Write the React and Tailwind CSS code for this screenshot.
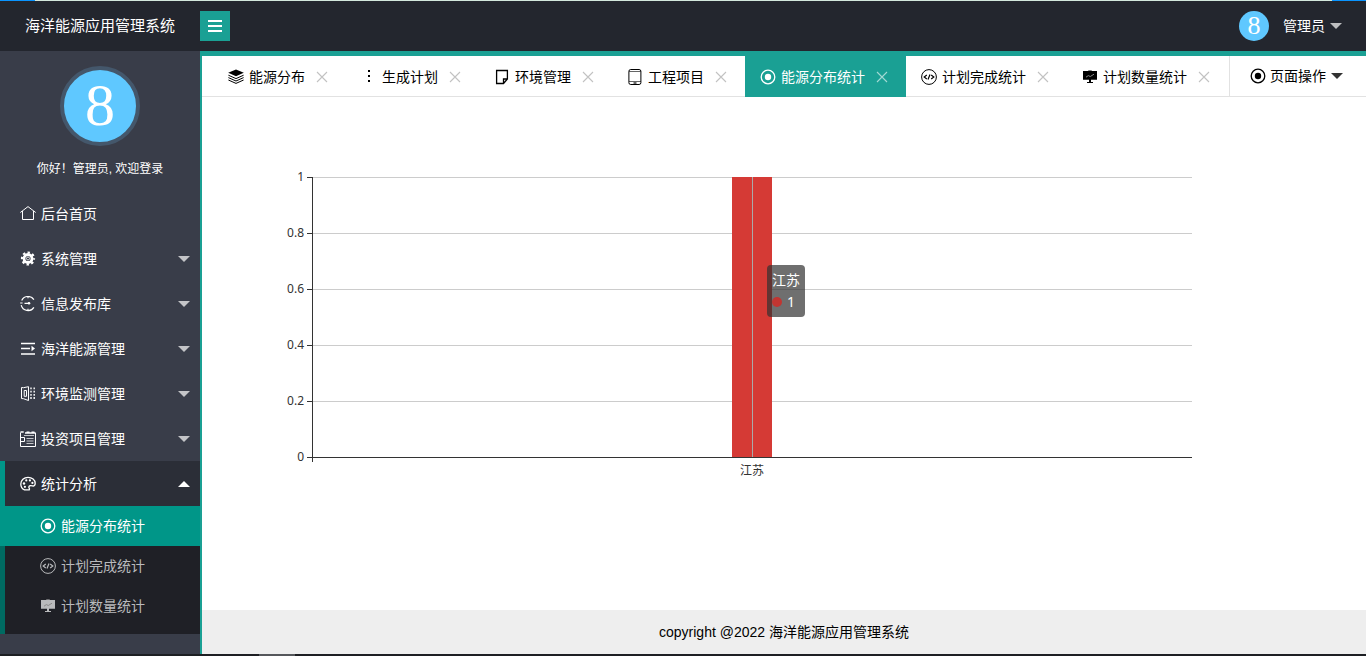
import React from "react";

const iconPaths = {
  home: (
    <g fill="none" stroke="currentColor" strokeWidth="1">
      <path d="M.3 6.5 8 .6l7.700 5.900M2.500 5v8.500h11V5" />
    </g>
  ),
  gear: (
    <g fill="none" stroke="currentColor">
      <circle cx="8" cy="7.5" r="4" strokeWidth="2.8" />
      <circle cx="8" cy="7.5" r="6" strokeWidth="2.2" strokeDasharray="2.4 2.312" strokeDashoffset="1.2" />
      <circle cx="8" cy="7.5" r="1.5" strokeWidth=".8" />
    </g>
  ),
  release: (
    <g fill="none" stroke="currentColor" strokeWidth="1.2">
      <path d="M13.9 3.700A7 7 0 0 0 1.700 4.500M1.200 9.100a7 7 0 0 0 12.700 2.200" />
      <path d="M.2 7h2.400M8 .3v2M8 12.700v2M4.500 7.300H9" />
      <circle cx="9" cy="7.300" r="1.300" fill="currentColor" stroke="none" />
    </g>
  ),
  spread: (
    <g fill="none" stroke="currentColor" strokeWidth="1.600">
      <path d="M1 2.500h14M1 7.500h9M1 13h14" />
      <path d="M11.500 4.700v5.600L15 7.500z" fill="currentColor" stroke="none" />
    </g>
  ),
  panels: (
    <g fill="none" stroke="currentColor" strokeWidth="1">
      <path d="M1.500 1.500v11l2 .2 5 1.800V.7l-5 1z" />
      <path d="M6.500 4.500H4.200v5.800h2.300z" />
      <path d="M11 1.500v12M14.200 1.500v12" strokeWidth="1.400" strokeDasharray="1.800 1.400" />
    </g>
  ),
  form: (
    <g fill="none" stroke="currentColor" strokeWidth="1">
      <path d="M.5 1.500v14h15v-14M.5 10.500h4v-4h-4" />
      <path d="M6.500 7.500h7M6.500 10h7M6.500 12.500h7M4 4.500h10" opacity=".7" />
      <path d="M.5 1h3.200M6.500 1.200h3M11.500 1.200h3M5 2h10" strokeWidth="1.600" />
    </g>
  ),
  palette: (
    <g fill="none" stroke="currentColor" strokeWidth="1.300">
      <path d="M9.300 13.800H4.500C2.200 12.900.8 10.500.8 7.900.8 4.100 4 1.300 8 1.300s7.200 2.500 7.200 6c0 2.200-1.200 3-2.800 2.600-1.700-.5-3.500-.3-3.600 1.200 0 1.100 1.300 1.500.5 2.700z" />
      <g fill="currentColor" stroke="none">
        <circle cx="4" cy="7.500" r="1.200" />
        <circle cx="6.300" cy="4.400" r="1.100" />
        <circle cx="9.900" cy="4.400" r="1.100" />
        <circle cx="12.400" cy="6.900" r="1.100" />
        <circle cx="4.900" cy="10.800" r="1.100" />
      </g>
    </g>
  ),
  radio: (
    <g>
      <circle cx="8" cy="8" r="6.8" fill="none" stroke="currentColor" strokeWidth="1.3" />
      <circle cx="8" cy="8" r="3.2" fill="currentColor" />
    </g>
  ),
  code: (
    <g fill="none" stroke="currentColor" strokeWidth="1">
      <circle cx="8" cy="8" r="7.4" />
      <path d="M5.800 6 3.200 8l2.600 2M10.200 6l2.600 2-2.600 2M9 5.600 7 10.400" strokeWidth="1.2" />
    </g>
  ),
  board: (
    <g>
      <path d="M1 2h5l.5-.6h3L10 2h5v8.800H9V13h2v1H5v-1h2v-2.200H1z" fill="currentColor" />
      <path d="m4 8.200 2.300-1.600 2 .9L12 5.200" fill="none" stroke="#888" strokeWidth="1" />
    </g>
  ),
  layers: (
    <g>
      <path d="M8 .4 15.800 3.700 8 7.300.2 3.700z" fill="currentColor" />
      <path d="m.4 6.200 7.600 3.400 7.600-3.400M.4 8.600 8 12l7.600-3.400M.4 11 8 14.400l7.600-3.400" fill="none" stroke="currentColor" strokeWidth="1" />
    </g>
  ),
  dots: (
    <g fill="currentColor">
      <rect x="7" y="1" width="2" height="2" />
      <rect x="7" y="6" width="2" height="2" />
      <rect x="7" y="11" width="2" height="2" />
    </g>
  ),
  note: (
    <path d="M2.600 1.500h10.800v8.500l-3.900 4.500H2.600zM13.400 10H9.500v4.500" fill="none" stroke="currentColor" strokeWidth="1.300" />
  ),
  tablet: (
    <g fill="none" stroke="currentColor" strokeWidth="1">
      <rect x="1.900" y=".5" width="12" height="15" rx="1.800" />
      <path d="M2 2.500h12M2 12.500h12" opacity=".6" />
      <path d="M6.500 14h3" strokeWidth="1.200" />
    </g>
  ),
};

function Icon({ name }) {
  return (
    <svg viewBox="0 0 16 16" className="h-4 w-4 shrink-0" aria-hidden="true">
      {iconPaths[name]}
    </svg>
  );
}

function Caret({ up = false, className = "" }) {
  return (
    <svg viewBox="0 0 12 6" className={"h-1.5 w-3 shrink-0 " + className} aria-hidden="true">
      <path d={up ? "M0 6 6 0l6 6z" : "M0 0h12L6 6z"} fill="currentColor" />
    </svg>
  );
}

const menu = [
  { icon: "gear", label: "系统管理" },
  { icon: "release", label: "信息发布库" },
  { icon: "spread", label: "海洋能源管理" },
  { icon: "panels", label: "环境监测管理" },
  { icon: "form", label: "投资项目管理" },
];

const tabs = [
  { icon: "layers", label: "能源分布" },
  { icon: "dots", label: "生成计划" },
  { icon: "note", label: "环境管理" },
  { icon: "tablet", label: "工程项目" },
  { icon: "radio", label: "能源分布统计", active: true },
  { icon: "code", label: "计划完成统计" },
  { icon: "board", label: "计划数量统计" },
];

function Header() {
  return (
    <header className="flex h-[50px] shrink-0 items-center bg-[#23262e] text-white">
      <h1 className="w-[200px] shrink-0 text-center text-[15px]">海洋能源应用管理系统</h1>
      <button type="button" aria-label="切换菜单" className="flex h-[30px] w-[30px] items-center justify-center bg-[#1aa094]">
        <svg viewBox="0 0 16 14" className="h-3.5 w-4" aria-hidden="true">
          <path d="M1 2h14M1 7h14M1 12h14" stroke="currentColor" strokeWidth="2" />
        </svg>
      </button>
      <button type="button" className="mr-6 ml-auto flex items-center text-sm">
        <span className="mr-3.5 flex h-[30px] w-[30px] items-center justify-center rounded-full bg-[#5fc8ff] font-['Liberation_Serif',serif] text-[26px] leading-none">
          8
        </span>
        管理员
        <Caret className="ml-[5px] text-[#bdbec0]" />
      </button>
    </header>
  );
}

function Sidebar() {
  return (
    <aside className="w-[200px] shrink-0 bg-[#393d49] text-white">
      <div className="flex h-[140px] flex-col items-center pt-[15px]">
        <div className="flex h-20 w-20 items-center justify-center rounded-full border-4 border-[#44576b] bg-[#5fc8ff] pb-0.5 font-['Liberation_Serif',serif] text-[60px] leading-none">
          8
        </div>
        <p className="mt-3 text-xs leading-[22px]">你好！管理员, 欢迎登录</p>
      </div>
      <nav>
        <ul className="text-sm">
          <li>
            <a href="#home" className="flex h-[45px] items-center gap-[5px] px-5">
              <Icon name="home" />
              后台首页
            </a>
          </li>
          {menu.map((m) => (
            <li key={m.label}>
              <button type="button" className="flex h-[45px] w-full items-center gap-[5px] pr-2.5 pl-5">
                <Icon name={m.icon} />
                {m.label}
                <Caret className="ml-auto text-[#c4c5c8]" />
              </button>
            </li>
          ))}
          <li>
            <button
              type="button"
              aria-expanded="true"
              className="flex h-[45px] w-full items-center gap-[5px] border-l-[5px] border-[#009688] bg-[#2b2e37] pr-2.5 pl-[15px]"
            >
              <Icon name="palette" />
              统计分析
              <Caret up className="ml-auto" />
            </button>
            <ul className="border-l-[5px] border-[#006a61] bg-[#1f2026] pb-2 text-[#b9babc]">
              <li className="-ml-[5px] bg-[#009688] text-white">
                <a href="#energy-stats" className="flex h-10 items-center gap-[5px] pl-10">
                  <Icon name="radio" />
                  能源分布统计
                </a>
              </li>
              <li>
                <a href="#done-stats" className="flex h-10 items-center gap-[5px] pl-[35px]">
                  <Icon name="code" />
                  计划完成统计
                </a>
              </li>
              <li>
                <a href="#count-stats" className="flex h-10 items-center gap-[5px] pl-[35px]">
                  <Icon name="board" />
                  计划数量统计
                </a>
              </li>
            </ul>
          </li>
        </ul>
      </nav>
    </aside>
  );
}

function TabBar() {
  return (
    <div className="flex h-[41px] shrink-0 text-sm text-black">
      <ul className="flex min-w-0 flex-1 overflow-hidden pl-[11px] shadow-[inset_0_-1px_0_#e2e2e2]">
        {tabs.map((t) => (
          <li
            key={t.label}
            className={
              "flex shrink-0 items-center px-[15px] " + (t.active ? "bg-[#1aa094] text-white" : "")
            }
          >
            <a href="#tab" className="flex items-center gap-[5px]">
              <Icon name={t.icon} />
              {t.label}
            </a>
            <button
              type="button"
              aria-label={"关闭" + t.label}
              className={
                "ml-2 flex h-[18px] w-[18px] items-center justify-center " +
                (t.active ? "text-[#a3d9d4]" : "text-[#c2c2c2]")
              }
            >
              <svg viewBox="0 0 12 12" className="h-3 w-3" aria-hidden="true">
                <path d="m1 1 10 10M11 1 1 11" stroke="currentColor" strokeWidth="1.1" />
              </svg>
            </button>
          </li>
        ))}
      </ul>
      <button
        type="button"
        className="flex w-[137px] shrink-0 items-center border-b border-l border-[#e2e2e2] pl-5"
      >
        <Icon name="radio" />
        <span className="ml-1">页面操作</span>
        <Caret className="ml-[5px] text-[#333]" />
      </button>
    </div>
  );
}

const ticks = [1, 0.8, 0.6, 0.4, 0.2, 0];

function Chart() {
  return (
    <div className="relative mt-5 mr-16 h-[400px]">
      <svg className="h-full w-full font-['Noto_Sans','Noto_Sans_CJK_SC',sans-serif] text-xs" role="img" aria-label="能源分布统计">
        <svg x="10%" y="60" width="80%" height="280" overflow="visible" shapeRendering="crispEdges">
          {ticks.map((t, i) => (
            <g key={t}>
              <rect x="0" y={i * 56} width="100%" height="1" fill={t === 0 ? "#333" : "#ccc"} />
              <rect x="-5" y={i * 56} width="5" height="1" fill="#333" />
              <text x="-8" y={i * 56 + 4} textAnchor="end" fill="#333">
                {t}
              </text>
            </g>
          ))}
          <svg x="50%" overflow="visible">
            <rect x="-20" y="0" width="40" height="280" fill="#d53a35" />
            <rect x="0" y="0" width="1" height="280" fill="#aaa" />
            <text x="0" y="298" textAnchor="middle" fill="#333">
              江苏
            </text>
          </svg>
          <rect x="0" y="0" width="1" height="285" fill="#333" />
        </svg>
      </svg>
      <div className="absolute top-[148px] left-1/2 ml-[15px] rounded bg-[#323232]/70 p-[5px] text-sm leading-[21px] text-white">
        <p>江苏</p>
        <p className="flex items-center gap-[5px] font-['Noto_Sans',sans-serif]">
          <span className="h-2.5 w-2.5 rounded-full bg-[#c23531]" />1
        </p>
      </div>
    </div>
  );
}

export default function App() {
  return (
    <div className="flex min-h-screen flex-col bg-white font-['Liberation_Sans','Noto_Sans_CJK_SC',sans-serif]">
      <div className="flex h-px shrink-0 justify-between bg-[#d3e8dc]">
        <span className="w-[35px] bg-[#0a94ff]" />
        <span className="w-[34px] bg-[#0a94ff]" />
      </div>
      <Header />
      <div className="flex flex-1">
        <Sidebar />
        <div className="flex min-w-0 flex-1 flex-col border-t-[5px] border-l-2 border-[#1aa094]">
          <TabBar />
          <main className="flex-1">
            <Chart />
          </main>
          <footer className="h-11 bg-[#eee] text-center text-sm leading-[44px] text-black">
            copyright @2022 海洋能源应用管理系统
          </footer>
        </div>
      </div>
      <div className="h-0.5 shrink-0 bg-[#1d1f23] pl-[259px]">
        <div className="h-full w-9 bg-[#55575b]" />
      </div>
    </div>
  );
}
